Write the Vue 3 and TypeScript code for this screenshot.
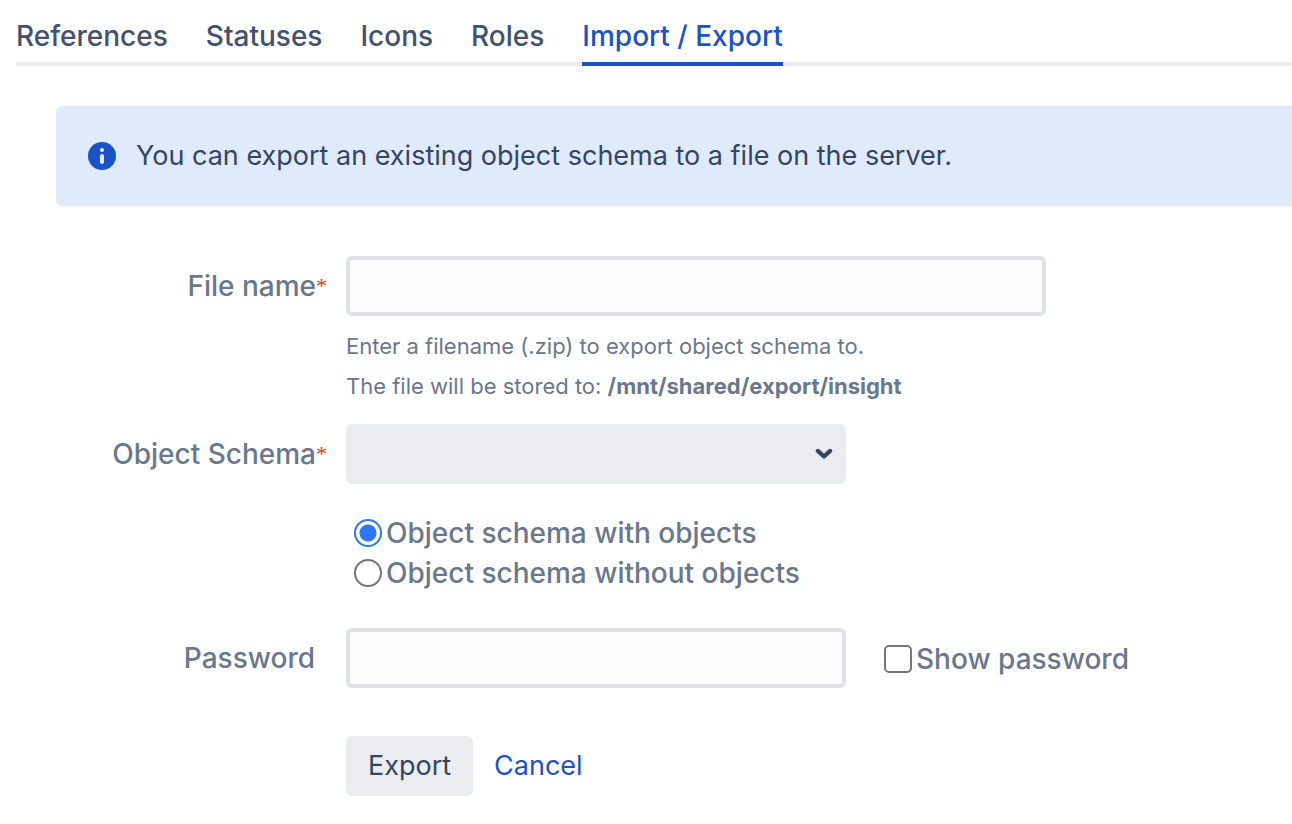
<script setup lang="ts">
import { ref } from 'vue'

const tabs = ['References', 'Statuses', 'Icons', 'Roles', 'Import / Export']
const activeTab = ref('Import / Export')
const fileName = ref('')
const schema = ref('')
const mode = ref('with')
const password = ref('')
const showPassword = ref(false)
</script>

<template>
  <main class="page">
    <nav class="tabs">
      <a
        v-for="tab in tabs"
        :key="tab"
        href="#"
        class="tab"
        :class="{ active: tab === activeTab }"
        @click.prevent="activeTab = tab"
      >{{ tab }}</a>
    </nav>
    <section class="content">
      <div class="notice">
        <svg class="info" viewBox="0 0 28 28" aria-hidden="true">
          <circle cx="14" cy="14" r="14" fill="#1b53c6" />
          <circle cx="14" cy="8" r="2" fill="#dfeafd" />
          <rect x="12" y="12" width="4" height="10" rx="2" fill="#dfeafd" />
        </svg>
        <p>You can export an existing object schema to a file on the server.</p>
      </div>
      <form class="form" @submit.prevent>
        <label class="label" for="file">File name<span class="required">*</span></label>
        <div class="field file-field">
          <input id="file" v-model="fileName" class="text wide" type="text" />
          <p class="hint">Enter a filename (.zip) to export object schema to.</p>
          <p class="hint">The file will be stored to: <strong>/mnt/shared/export/insight</strong></p>
        </div>

        <label class="label" for="schema">Object Schema<span class="required">*</span></label>
        <div class="field select-wrap">
          <select id="schema" v-model="schema" class="select"><option value=""></option></select>
          <svg class="chevron" viewBox="0 0 18 12" aria-hidden="true">
            <path d="M3 3l6 5.5L15 3" fill="none" stroke="#344563" stroke-width="4.4" stroke-linecap="round" stroke-linejoin="round" />
          </svg>
        </div>

        <div class="field options">
          <label class="option"><input v-model="mode" type="radio" name="mode" value="with" />Object schema with objects</label>
          <label class="option"><input v-model="mode" type="radio" name="mode" value="without" />Object schema without objects</label>
        </div>

        <label class="label optional" for="password">Password</label>
        <div class="field password-row">
          <input id="password" v-model="password" class="text" :type="showPassword ? 'text' : 'password'" />
          <label class="option"><input v-model="showPassword" type="checkbox" />Show password</label>
        </div>

        <div class="field actions">
          <button class="export" type="submit">Export</button>
          <a class="cancel" href="#" @click.prevent>Cancel</a>
        </div>
      </form>
    </section>
  </main>
</template>

<style>
body {
  margin: 0;
  background: #fff;
}
</style>

<style scoped>
* {
  box-sizing: border-box;
}
.page {
  padding: 10px 0 28px 16px;
  overflow: hidden;
  font-family: Inter, "Liberation Sans", sans-serif;
  font-size: 27px;
  line-height: 40px;
  color: #344563;
}
p {
  margin: 0;
}
.tabs {
  display: flex;
  gap: 38px;
  height: 56px;
  box-shadow: inset 0 -4px #ebecf0;
}
.tab {
  padding-top: 6px;
  border-bottom: 4px solid transparent;
  color: #42526e;
  font-size: 28px;
  font-weight: 500;
  text-decoration: none;
  white-space: nowrap;
}
.tab.active {
  color: #1b53c6;
  border-color: #1b53c6;
}
.content {
  padding: 40px 0 0 40px;
}
.notice {
  display: flex;
  align-items: center;
  gap: 20px;
  padding: 30px 32px;
  background: #dfeafd;
  border-radius: 6px 0 0 6px;
}
.info {
  width: 28px;
  height: 28px;
  flex: none;
}
.form {
  display: grid;
  grid-template-columns: 271px minmax(0, 1fr);
  column-gap: 19px;
  padding-top: 50px;
  color: #6b778c;
  font-size: 28px;
  font-weight: 500;
}
.label {
  padding-top: 10px;
  text-align: right;
}
.optional {
  padding-right: 12px;
}
.required {
  color: #de350b;
  font-family: "Liberation Serif", serif;
  font-size: 22px;
  font-weight: 400;
  line-height: 20px;
  vertical-align: 3px;
}
.field {
  grid-column: 2;
}
.file-field {
  padding-bottom: 18px;
}
.text {
  display: block;
  width: 500px;
  height: 60px;
  padding: 6px 12px;
  border: 4px solid #dfe1e6;
  border-radius: 6px;
  background: #fafbfc;
  color: #344563;
  font: inherit;
}
.wide {
  width: 700px;
  margin-bottom: 10px;
}
.hint {
  font-size: 22px;
  font-weight: 400;
}
.hint strong {
  font-weight: 700;
}
.select-wrap {
  position: relative;
  width: 500px;
}
.select {
  display: block;
  appearance: none;
  width: 100%;
  height: 60px;
  padding: 0 40px 0 16px;
  border: 0;
  border-radius: 6px;
  background: #ebecf0;
  color: #344563;
  font: inherit;
}
.chevron {
  position: absolute;
  top: 24px;
  right: 13px;
  width: 18px;
  height: 12px;
  pointer-events: none;
}
.options {
  padding: 29px 0 35px 8px;
}
.option {
  display: flex;
  align-items: center;
  gap: 4px;
}
.option input {
  appearance: none;
  width: 28px;
  height: 28px;
  flex: none;
  margin: 0;
  border: 2px solid #767676;
  background: #fff;
}
.option input[type="radio"] {
  border-radius: 50%;
}
.option input[type="radio"]:checked {
  border-color: #2f78f6;
  background: radial-gradient(circle, #2f78f6 8px, #fff 9px);
}
.option input[type="checkbox"] {
  border-radius: 5px;
}
.option input[type="checkbox"]:checked {
  background: #2f78f6;
}
.password-row {
  display: flex;
  align-items: center;
  gap: 38px;
}
.password-row .option {
  padding-top: 2px;
}
.actions {
  display: flex;
  align-items: center;
  gap: 21px;
  padding-top: 48px;
  font-size: 27px;
  font-weight: 400;
}
.export {
  height: 60px;
  padding: 0 22px;
  border: 0;
  border-radius: 6px;
  background: #ebecf0;
  color: #344563;
  font: inherit;
}
.cancel {
  color: #1b53c6;
  text-decoration: none;
}
</style>
